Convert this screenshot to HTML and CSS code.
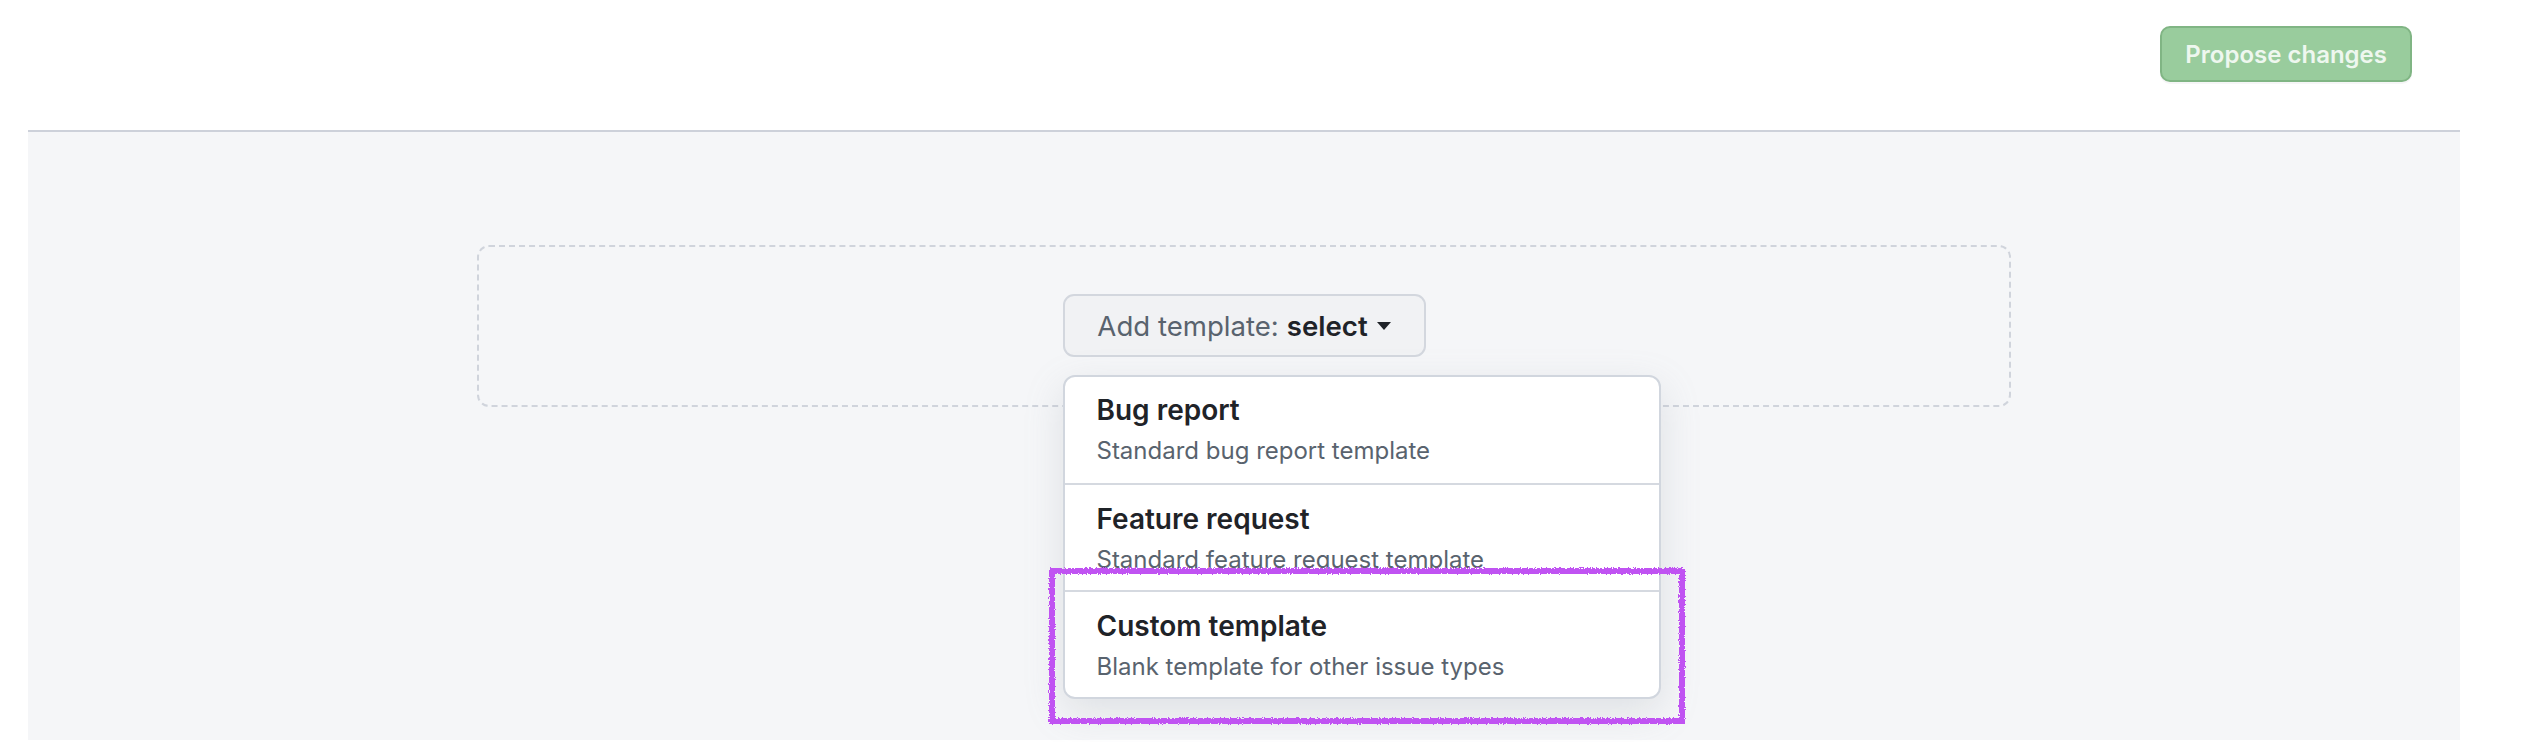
FILE: index.html
```html
<!DOCTYPE html>
<html lang="en">
<head>
<meta charset="utf-8">
<title>Issue templates</title>
<link rel="stylesheet" href="styles.css">
</head>
<body>
<div class="page">
  <header class="topbar">
    <button class="btn-propose" type="button" disabled>Propose changes</button>
  </header>
  <main class="editor">
    <div class="dropzone">
      <div class="picker">
        <button class="btn-add" type="button">
          <span class="btn-add-label">Add template:</span>
          <span class="btn-add-value">select</span>
          <span class="caret"></span>
        </button>
        <ul class="menu">
          <li class="menu-item">
            <div class="menu-title">Bug report</div>
            <div class="menu-desc">Standard bug report template</div>
          </li>
          <li class="menu-item">
            <div class="menu-title">Feature request</div>
            <div class="menu-desc">Standard feature request template</div>
          </li>
          <li class="menu-item">
            <div class="menu-title">Custom template</div>
            <div class="menu-desc">Blank template for other issue types</div>
          </li>
        </ul>
      </div>
    </div>
  </main>
</div>
<svg class="annotation" width="644" height="164" viewBox="0 0 644 164" aria-hidden="true">
  <defs>
    <filter id="rough" x="-5%" y="-5%" width="110%" height="110%">
      <feTurbulence type="fractalNoise" baseFrequency="0.9" numOctaves="2" seed="3" result="noise"/>
      <feDisplacementMap in="SourceGraphic" in2="noise" scale="4" xChannelSelector="R" yChannelSelector="G"/>
    </filter>
  </defs>
  <rect class="annotation-rect" x="7" y="7" width="630" height="150" filter="url(#rough)"/>
</svg>
</body>
</html>
```

FILE: styles.css
```css
* {
  box-sizing: border-box;
}

html, body {
  margin: 0;
  padding: 0;
  background: #ffffff;
  font-family: Inter, "Noto Sans", "Liberation Sans", sans-serif;
  color: #1f2328;
}

body {
  position: relative;
  height: 742px;
  overflow: hidden;
}

.page {
  margin: 0 64px 0 28px;
}

.topbar {
  display: flex;
  justify-content: flex-end;
  padding: 26px 48px 48px 0;
}

.btn-propose {
  height: 56px;
  padding: 0 23px;
  border: 2px solid #80b584;
  border-radius: 10px;
  background: #99cc9d;
  color: #eef7ef;
  font-family: inherit;
  font-size: 24px;
  font-weight: 600;
  box-shadow: 0 2px 0 rgba(31, 35, 40, 0.04);
}

.editor {
  border-top: 2px solid #cdd1da;
  background: #f5f6f8;
  min-height: 610px;
  padding-top: 113px;
}

.dropzone {
  width: 1534px;
  height: 162px;
  margin: 0 auto;
  border: 2px dashed #d0d4dc;
  border-radius: 12px;
  display: flex;
  justify-content: center;
  padding-top: 47px;
}

.picker {
  position: relative;
  height: 63px;
}

.btn-add {
  height: 63px;
  width: 363px;
  display: flex;
  align-items: center;
  justify-content: center;
  padding: 0;
  border: 2px solid #d3d7de;
  border-radius: 11px;
  background: #f1f2f4;
  font-family: inherit;
  font-size: 27.6px;
  color: #59636e;
}

.btn-add-label {
  font-weight: 400;
}

.btn-add-value {
  margin-left: 8px;
  font-weight: 600;
  color: #1f2328;
}

.caret {
  margin-left: 9px;
  width: 0;
  height: 0;
  border-left: 7.5px solid transparent;
  border-right: 7.5px solid transparent;
  border-top: 8px solid #1f2328;
}

.menu {
  position: absolute;
  top: 81px;
  left: 0;
  width: 598px;
  margin: 0;
  padding: 0;
  list-style: none;
  background: #ffffff;
  border: 2px solid #d1d6de;
  border-radius: 12px;
  box-shadow: 0 13px 38px rgba(140, 149, 159, 0.22);
  overflow: hidden;
}

.menu-item {
  height: 107px;
  padding: 18px 32px 0;
  border-top: 2px solid #d5d9e0;
}

.menu-item:first-child {
  border-top: 0;
  height: 106px;
  padding-top: 17px;
}

.menu-title {
  font-size: 28px;
  line-height: 32px;
  font-weight: 600;
  color: #1f2328;
}

.menu-desc {
  margin-top: 9px;
  font-size: 24px;
  line-height: 32px;
  color: #59636e;
}

.annotation {
  position: absolute;
  left: 1045px;
  top: 564px;
  pointer-events: none;
}

.annotation-rect {
  fill: none;
  stroke: #c052f2;
  stroke-width: 6;
}
```
